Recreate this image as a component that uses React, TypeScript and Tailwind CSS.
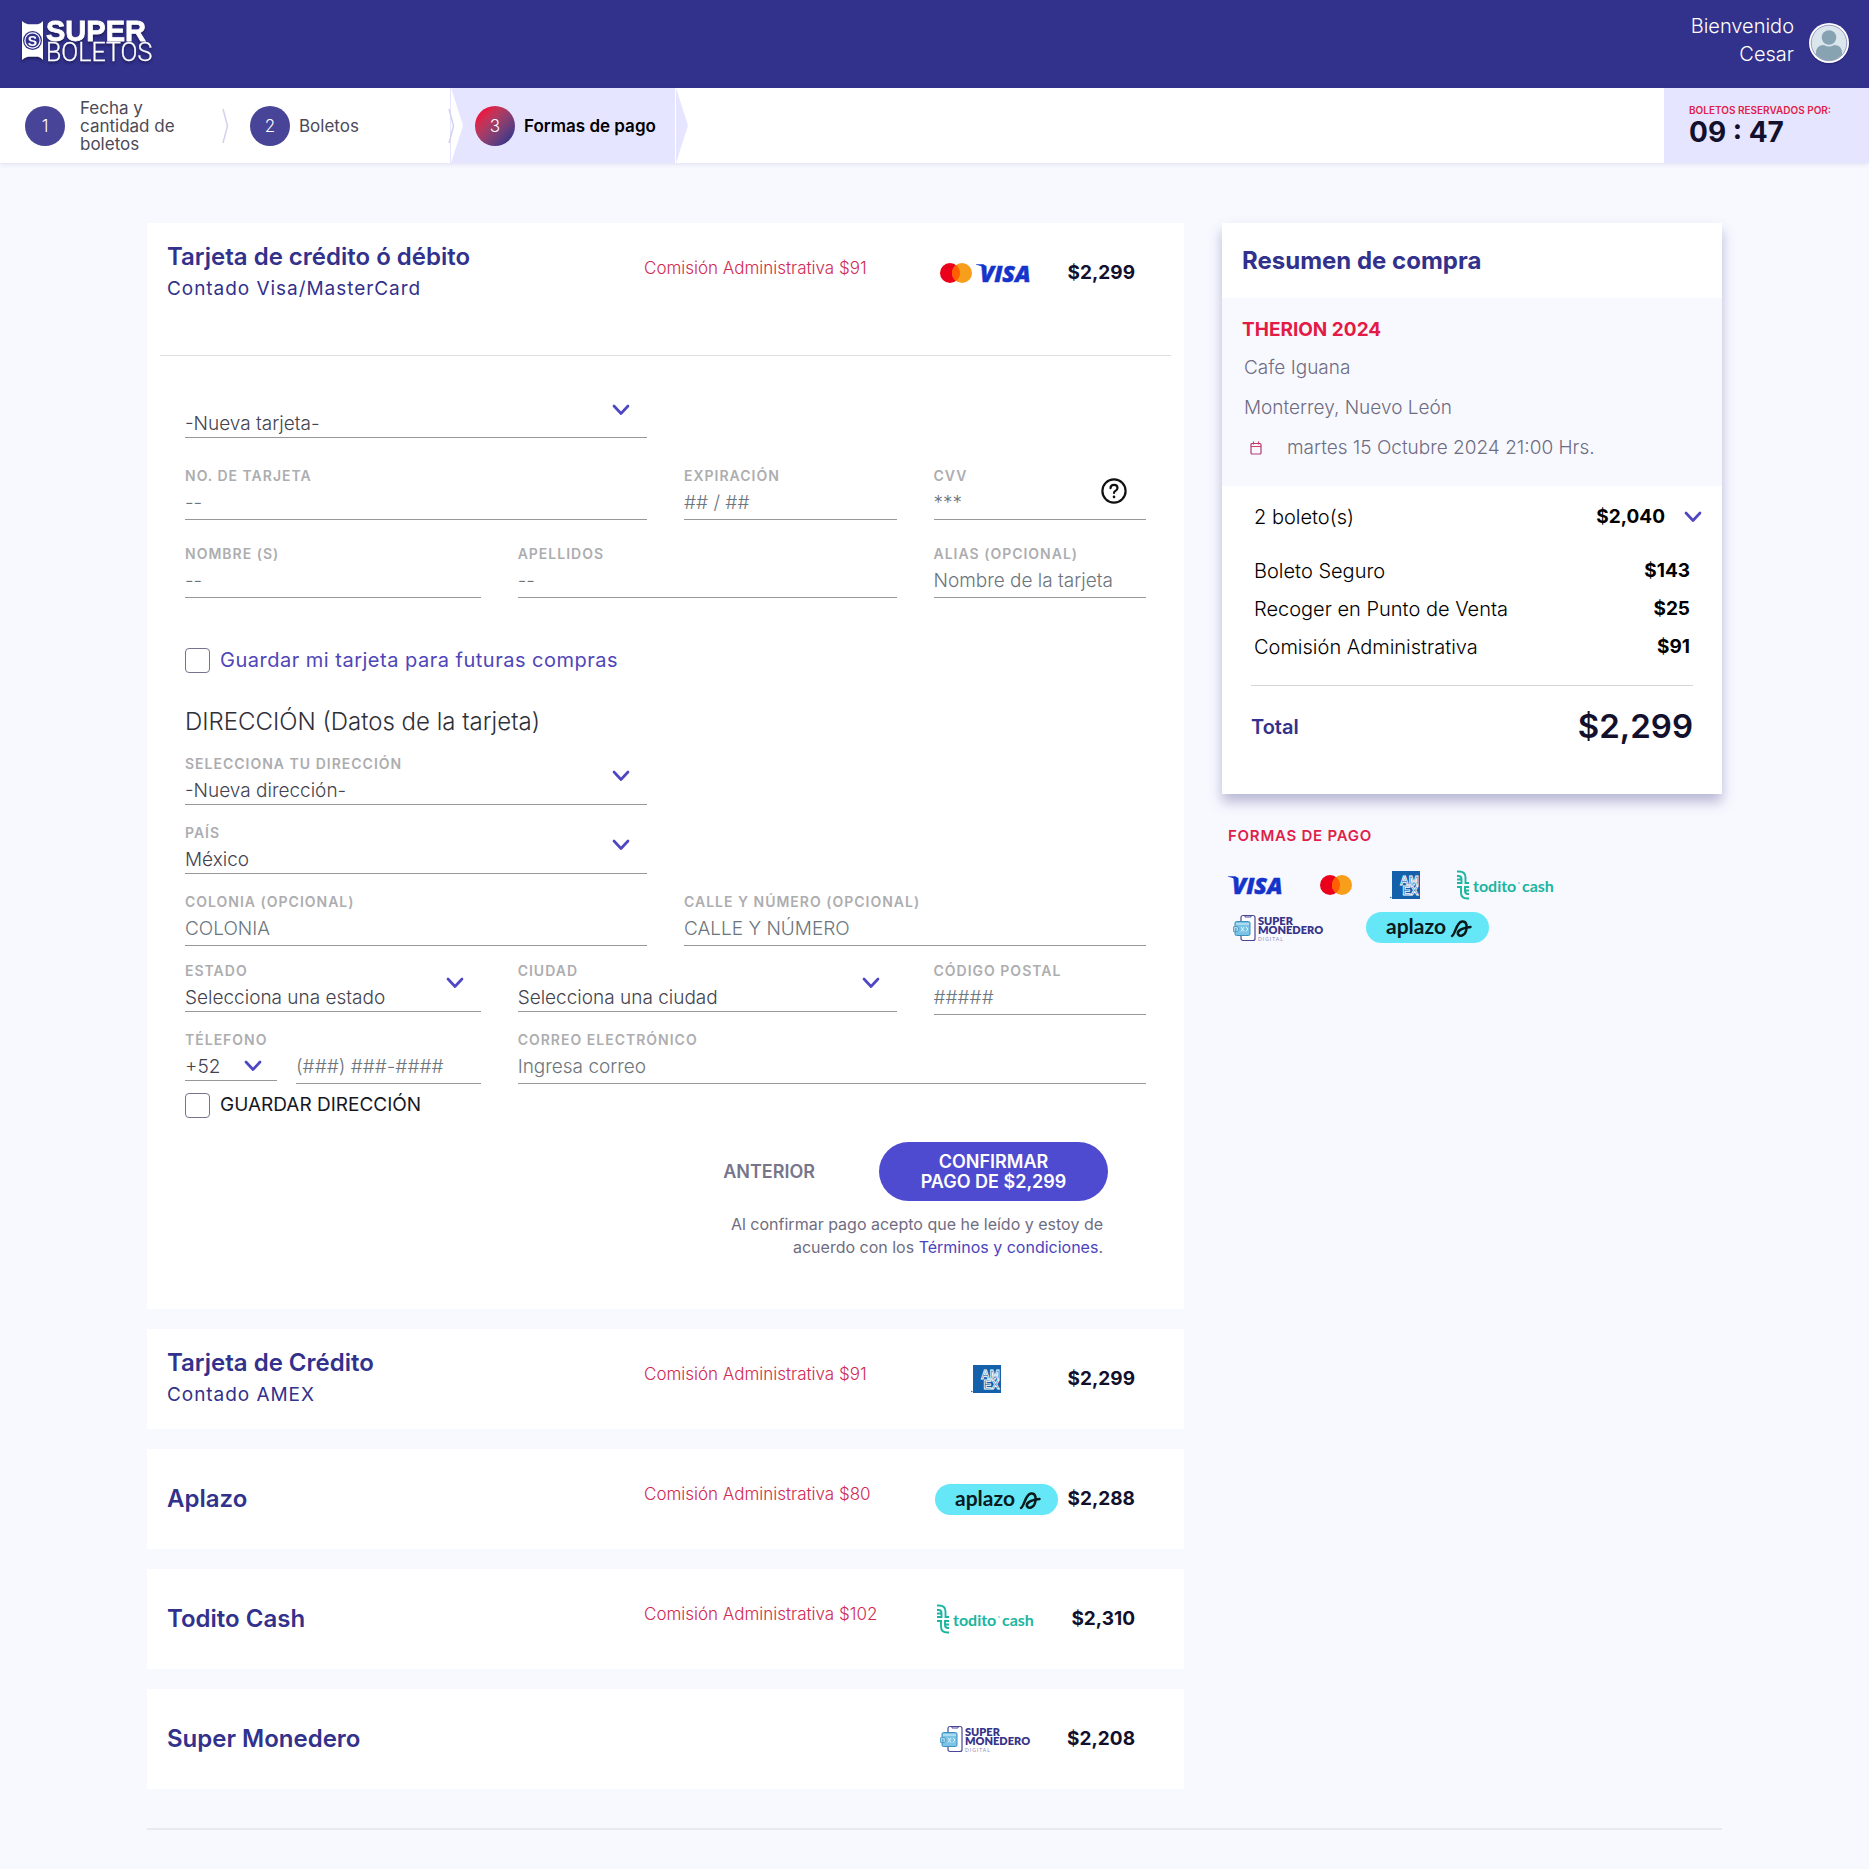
import React from "react";

function Chevron({ className = "" }: { className?: string }) {
  return (
    <svg viewBox="0 0 18 12" className={`h-3 w-[18px] ${className}`} fill="none" aria-hidden="true">
      <path d="M2 2l7 7.500L16 2" stroke="#4f46c4" strokeWidth="2.700" strokeLinecap="round" strokeLinejoin="round" />
    </svg>
  );
}

function SuperBoletosLogo() {
  return (
    <svg viewBox="0 -8 140 60" className="h-[60px] w-[140px] drop-shadow-[0_2px_1px_rgba(10,10,50,0.5)]" role="img" aria-label="Superboletos">
      <path d="M2 1q2.500 2.500 6 3.200h10q3-.7 5-3.200V40q-2-2.500-5-3.200H8q-3.500.7-6 3.200z" fill="#fff" />
      <circle cx="12.500" cy="20.500" r="9.500" fill="#32318b" />
      <circle cx="12.500" cy="20.500" r="8.200" fill="#fff" />
      <circle cx="12.500" cy="20.500" r="7" fill="#32318b" />
      <text x="12.500" y="25.500" textAnchor="middle" fill="#fff" fontSize="14" fontWeight="700" fontFamily="Liberation Sans, sans-serif">S</text>
      <text x="26" y="20.500" fill="#fff" stroke="#fff" strokeWidth=".8" fontSize="29" fontWeight="700" fontFamily="Liberation Sans, sans-serif">SUPER</text>
      <text x="26" y="40.500" fill="#fff" stroke="#fff" strokeWidth=".3" fontSize="25" fontWeight="300" fontFamily="Roboto, sans-serif">BOLETOS</text>
    </svg>
  );
}

function Mastercard() {
  return (
    <svg viewBox="0 0 32 20" className="h-5 w-8 shrink-0" role="img" aria-label="Mastercard">
      <circle cx="10" cy="10" r="10" fill="#eb001b" />
      <circle cx="22" cy="10" r="10" fill="#f79e1b" />
      <path d="M16 2a10 10 0 0 1 0 16a10 10 0 0 1 0-16z" fill="#ff5f00" />
    </svg>
  );
}

function Visa() {
  return (
    <svg viewBox="0 0 56 20" className="h-5 w-14 shrink-0 overflow-visible" role="img" aria-label="Visa">
      <path d="M0 1.200h7.500l2 1.600 1 4Q6.500 3 0 1.800z" fill="#1434cb" />
      <text x="4" y="18.500" fill="#1434cb" stroke="#1434cb" strokeWidth=".5" fontSize="23" fontStyle="italic" fontWeight="800" fontFamily="Open Sans, sans-serif">VISA</text>
    </svg>
  );
}

function Amex() {
  return (
    <svg viewBox="0 0 30 28" className="h-7 w-[30px] shrink-0" role="img" aria-label="American Express">
      <path d="M2 0h28v28H2z" fill="#1560ab" />
      <circle cx=".8" cy="26.500" r=".7" fill="#1560ab" />
      <g fill="#1560ab" stroke="#fff" strokeWidth=".8" fontSize="12" fontWeight="700" fontFamily="Liberation Sans, sans-serif">
        <text x="10" y="13.500">AM</text>
        <text x="12.500" y="24">EX</text>
      </g>
    </svg>
  );
}

function Todito() {
  return (
    <svg viewBox="0 0 100 30" className="h-[30px] w-[100px] shrink-0" role="img" aria-label="todito cash">
      <g fill="none" stroke="#1bb5a0" strokeWidth="1.900">
        <path d="M1 1.500h2q6.500 0 6.500 6V13h3.500M1 6h1.500Q5.500 6 5.500 9v4H1M1 9.500h4.500" />
        <path d="M13 28.500h-1.500q-6.500 0-6.500-6V17H1M13 24h-1q-3 0-3-3v-4h4M9 20.500h4" />
      </g>
      <text x="17" y="22" fill="#1bb5a0" fontSize="16" fontWeight="700" fontFamily="Lato, sans-serif">todito</text>
      <circle cx="63" cy="13" r=".7" fill="#1bb5a0" />
      <text x="66" y="22" fill="#1bb5a0" fontSize="16" fontWeight="700" fontFamily="Lato, sans-serif">cash</text>
    </svg>
  );
}

function SuperMonedero() {
  return (
    <svg viewBox="0 0 92 28" className="h-7 w-[92px] shrink-0" role="img" aria-label="Super Monedero Digital">
      <rect x="8" y="1.500" width="14" height="25" rx="2" fill="#fff" stroke="#4a4796" strokeWidth="1.200" />
      <path d="M12 1.500v1.500h6V1.500" fill="none" stroke="#4a4796" />
      <rect x="2" y="7.500" width="15" height="14" rx="1.500" fill="#7cc4e6" stroke="#3b8fbe" />
      <path d="M3 10h13M1 13.500h4v4H1zM8 13l3 4.500m0-4.500l-3 4.500M13 13l2 2-2 2.500" fill="none" stroke="#e8f8ff" strokeWidth=".9" />
      <path d="M.6 12.800h4.200q2 2.500 0 4.800H.6z" fill="none" stroke="#3b8fbe" strokeWidth=".9" />
      <text x="25" y="10.500" fill="#373388" fontSize="11" fontWeight="800" fontFamily="Lato, sans-serif">SUPER</text>
      <text x="25" y="20" fill="#373388" fontSize="11" fontWeight="800" fontFamily="Lato, sans-serif">MONEDERO</text>
      <text x="25" y="27" fill="#8d8bb8" fontSize="5" letterSpacing="1" fontFamily="Lato, sans-serif">DIGITAL</text>
    </svg>
  );
}

function AplazoLogo() {
  return (
    <svg viewBox="0 0 123 31" className="h-[31px] w-[123px] shrink-0" role="img" aria-label="aplazo">
      <rect width="123" height="31" rx="15.500" fill="#66e7f7" />
      <text x="20" y="22" fill="#0b1a1c" fontSize="21" fontWeight="700" fontFamily="Lato, sans-serif">aplazo</text>
      <path d="M86 24c3.500-2 4-13.500 10-14.500 5.500-.5 5 6 4 9.500-1.500 5-6.500 6-8 3.200-1.200-2.800 3-6.200 12.500-7.200" fill="none" stroke="#0b1a1c" strokeWidth="2.500" strokeLinecap="round" />
    </svg>
  );
}

function Avatar() {
  return (
    <svg viewBox="0 0 44 44" className="-mt-0.5 size-11" role="img" aria-label="Perfil">
      <circle cx="22" cy="23" r="20.500" fill="#201f66" opacity=".5" />
      <circle cx="22" cy="22" r="20" fill="#fff" />
      <circle cx="22" cy="22" r="17.800" fill="#dbe6ec" stroke="#8583bb" strokeWidth=".8" />
      <clipPath id="avatar-clip"><circle cx="22" cy="22" r="17.500" /></clipPath>
      <g fill="#87a3b2" clipPath="url(#avatar-clip)">
        <circle cx="22" cy="16.500" r="7.300" />
        <path d="M9 44V32q0-8 8-8 5 3 10 0 8 0 8 8v12z" />
      </g>
    </svg>
  );
}

const labelClass = "block h-5 text-sm leading-5 font-semibold tracking-[1px] whitespace-nowrap text-[#adadb0]";
const inputClass =
  "block h-[34px] w-full rounded-none border-b border-[#98989c] bg-transparent text-[19px] font-light text-[#5b5b6c] outline-none placeholder:text-[#6c757d] placeholder:opacity-100";
const selectClass =
  "block h-[31px] w-full appearance-none rounded-none border-b border-[#98989c] bg-transparent pt-[3px] text-[19px] leading-6 font-light text-[#43434f] outline-none";

type FieldProps = { id: string; label: string; placeholder: string; className: string; children?: React.ReactNode };

function TextField({ id, label, placeholder, className, children }: FieldProps) {
  return (
    <div className={`relative ${className}`}>
      <label htmlFor={id} className={labelClass}>{label}</label>
      <input id={id} placeholder={placeholder} className={inputClass} />
      {children}
    </div>
  );
}

function SelectField({ id, label, option, className }: { id: string; label: string; option: string; className: string }) {
  return (
    <div className={`relative ${className}`}>
      <label htmlFor={id} className={labelClass}>{label}</label>
      <select id={id} className={selectClass}>
        <option>{option}</option>
      </select>
      <Chevron className="pointer-events-none absolute top-4 right-[17px]" />
    </div>
  );
}

function CheckField({ id, children, className }: { id: string; children: React.ReactNode; className: string }) {
  return (
    <div className="flex h-7 items-center gap-2.5">
      <input id={id} type="checkbox" className="size-[25px] shrink-0 appearance-none rounded border border-[#77738c] bg-white checked:bg-[#4f4bd0]" />
      <label htmlFor={id} className={className}>{children}</label>
    </div>
  );
}

function MethodHeader({ title, subtitle, fee, logo, price }: { title: string; subtitle?: string; fee?: string; logo: React.ReactNode; price: string }) {
  return (
    <div className="flex h-[100px] items-center pr-[49px] pl-5 whitespace-nowrap">
      <div className="flex-1">
        <h2 className="text-2xl leading-8 font-semibold text-[#32318b]">{title}</h2>
        {subtitle && <p className="text-[19px] leading-8 tracking-wider text-[#32318b]">{subtitle}</p>}
      </div>
      <p className="w-[289px] pb-2 text-[17px] font-light text-[#d02a52]">{fee}</p>
      <div className="flex w-[130px] items-center">{logo}</div>
      <p className="w-[72px] text-right text-[19px] font-bold text-[#12102c]">{price}</p>
    </div>
  );
}

function CardForm() {
  return (
    <form className="mx-[13px] border-t border-[#dfdfe2] px-[25px] pt-[51px]" onSubmit={(e) => e.preventDefault()}>
      <div className="grid grid-cols-12 gap-x-[37px]">
        <div className="relative col-span-6 h-[59px]">
          <select aria-label="Tarjeta" className={selectClass}>
            <option>-Nueva tarjeta-</option>
          </select>
          <Chevron className="pointer-events-none absolute -top-[3px] right-[17px]" />
        </div>
      </div>
      <div className="grid auto-rows-[78px] grid-cols-12 gap-x-[37px]">
        <TextField id="card-number" label="NO. DE TARJETA" placeholder="--" className="col-span-6" />
        <TextField id="card-exp" label="EXPIRACIÓN" placeholder="## / ##" className="col-span-3" />
        <TextField id="card-cvv" label="CVV" placeholder="***" className="col-span-3">
          <button type="button" aria-label="Ayuda CVV" className="absolute top-3 right-[19px]">
            <svg viewBox="0 0 26 26" className="size-[26px]" fill="none" stroke="#111" strokeWidth="2.200" strokeLinecap="round">
              <circle cx="13" cy="13" r="11.600" />
              <path d="M9.500 10.200q0-3.400 3.500-3.400t3.500 3.200q0 1.800-2 2.900-1.500.9-1.500 2.100" />
              <path d="M13 18.800v.1" strokeWidth="2.600" />
            </svg>
          </button>
        </TextField>
        <TextField id="first-name" label="NOMBRE (S)" placeholder="--" className="col-span-4" />
        <TextField id="last-name" label="APELLIDOS" placeholder="--" className="col-span-5" />
        <TextField id="alias" label="ALIAS (OPCIONAL)" placeholder="Nombre de la tarjeta" className="col-span-3" />
      </div>
      <div className="pt-6">
        <CheckField id="save-card" className="text-xl tracking-wide text-[#4f46b8]">Guardar mi tarjeta para futuras compras</CheckField>
      </div>
      <h3 className="pt-8 pb-4 text-2xl leading-8 font-light text-[#2f2f38]">DIRECCIÓN (Datos de la tarjeta)</h3>
      <div className="grid auto-rows-[69px] grid-cols-12 gap-x-[37px]">
        <SelectField id="address" label="SELECCIONA TU DIRECCIÓN" option="-Nueva dirección-" className="col-span-6" />
        <SelectField id="country" label="PAÍS" option="México" className="col-span-6 col-start-1" />
        <TextField id="colony" label="COLONIA (OPCIONAL)" placeholder="COLONIA" className="col-span-6 col-start-1" />
        <TextField id="street" label="CALLE Y NÚMERO (OPCIONAL)" placeholder="CALLE Y NÚMERO" className="col-span-6" />
        <SelectField id="state" label="ESTADO" option="Selecciona una estado" className="col-span-4" />
        <SelectField id="city" label="CIUDAD" option="Selecciona una ciudad" className="col-span-5" />
        <TextField id="zip" label="CÓDIGO POSTAL" placeholder="#####" className="col-span-3" />
        <div className="col-span-4">
          <label htmlFor="phone" className={labelClass}>TÉLEFONO</label>
          <div className="flex items-start gap-[19px]">
            <div className="relative w-[92px] shrink-0">
              <select aria-label="Lada" className={selectClass}>
                <option>+52</option>
              </select>
              <Chevron className="pointer-events-none absolute top-2.5 right-[15px]" />
            </div>
            <input id="phone" placeholder="(###) ###-####" className={inputClass} />
          </div>
        </div>
        <TextField id="email" label="CORREO ELECTRÓNICO" placeholder="Ingresa correo" className="col-span-8" />
      </div>
      <div className="-mt-2">
        <CheckField id="save-address" className="text-[19px] text-[#17171f]">GUARDAR DIRECCIÓN</CheckField>
      </div>
      <div className="mt-[23px] flex items-center justify-end gap-16 pr-[38px]">
        <button type="button" className="text-lg font-semibold text-[#77758b]">ANTERIOR</button>
        <button type="submit" className="h-[59px] w-[229px] rounded-full bg-[#4f4bd0] text-lg leading-5 font-semibold text-white">
          CONFIRMAR
          <br />
          PAGO DE $2,299
        </button>
      </div>
      <p className="mt-3 mb-[50px] pr-[43px] text-right text-base leading-[23px] text-[#6f6d82]">
        Al confirmar pago acepto que he leído y estoy de
        <br />
        acuerdo con los <a href="#terminos" className="text-[#4a44bd]">Términos y condiciones</a>.
      </p>
    </form>
  );
}

const methods = [
  { title: "Tarjeta de Crédito", subtitle: "Contado AMEX", fee: "Comisión Administrativa $91", logo: <div className="pl-[38px]"><Amex /></div>, price: "$2,299" },
  { title: "Aplazo", fee: "Comisión Administrativa $80", logo: <div className="pl-0.5"><AplazoLogo /></div>, price: "$2,288" },
  { title: "Todito Cash", fee: "Comisión Administrativa $102", logo: <div className="pl-[3px]"><Todito /></div>, price: "$2,310" },
  { title: "Super Monedero", logo: <div className="pl-[7px]"><SuperMonedero /></div>, price: "$2,208" },
];

const charges = [
  { name: "Boleto Seguro", amount: "$143" },
  { name: "Recoger en Punto de Venta", amount: "$25" },
  { name: "Comisión Administrativa", amount: "$91" },
];

function Summary() {
  return (
    <aside className="w-[500px] shrink-0">
      <section className="bg-white pb-[27px] shadow-[0_8px_12px_rgba(90,85,150,0.4)]">
        <h2 className="flex h-[75px] items-center px-5 text-2xl font-bold text-[#32318b]">Resumen de compra</h2>
        <div className="h-[188px] bg-[#f8f9ff] pt-3 pl-[22px] text-[19px] leading-10 font-light text-[#6f6d82]">
          <h3 className="-ml-0.5 text-[19px] leading-10 font-bold text-[#e31b45]">THERION 2024</h3>
          <p className="-mt-0.5">Cafe Iguana</p>
          <p>Monterrey, Nuevo León</p>
          <p className="flex items-center">
            <svg viewBox="0 0 12 14" className="mr-[25px] ml-1.5 h-3.5 w-3" fill="none" stroke="#b03a78" strokeWidth="1.200" aria-hidden="true">
              <rect x="1" y="2.500" width="10" height="10.500" rx="1" />
              <path d="M1 5.500h10M3.500.5v3M8.500.5v3" stroke="#dc3a60" />
            </svg>
            martes 15 Octubre 2024 21:00 Hrs.
          </p>
        </div>
        <div className="flex h-[62px] items-center pr-5 pl-8">
          <span className="flex-1 text-xl font-light text-black">2 boleto(s)</span>
          <span className="text-[19px] font-bold text-black">$2,040</span>
          <button type="button" aria-label="Ver detalle" className="ml-[19px]"><Chevron /></button>
        </div>
        <dl className="px-8 pt-1 leading-[38px]">
          {charges.map((c) => (
            <div key={c.name} className="flex justify-between">
              <dt className="text-xl leading-[38px] font-light text-black">{c.name}</dt>
              <dd className="text-[19px] leading-[38px] font-bold text-black">{c.amount}</dd>
            </div>
          ))}
        </dl>
        <div className="mx-[29px] mt-[19px] flex h-[82px] items-center justify-between border-t border-[#d5d5d9]">
          <span className="text-xl font-semibold text-[#32318b]">Total</span>
          <span className="text-[33px] font-semibold text-[#12102c]">$2,299</span>
        </div>
      </section>
      <section className="pt-8 pl-1.5">
        <h3 className="text-[15px] leading-5 font-semibold tracking-wider text-[#de1f4a]">FORMAS DE PAGO</h3>
        <div className="mt-[23px] flex h-8 items-center">
          <Visa />
          <div className="ml-9"><Mastercard /></div>
          <div className="ml-[38px]"><Amex /></div>
          <div className="ml-9"><Todito /></div>
        </div>
        <div className="mt-[11px] flex items-center pl-[5px]">
          <SuperMonedero />
          <div className="ml-[41px]"><AplazoLogo /></div>
        </div>
      </section>
    </aside>
  );
}

function StepArrow() {
  return (
    <svg viewBox="0 0 8 36" className="h-9 w-2" fill="none" stroke="#d3d1ee" strokeWidth="1.500" aria-hidden="true">
      <path d="M1 1l4.500 17L1 35" />
    </svg>
  );
}

function Steps() {
  return (
    <nav aria-label="Progreso" className="flex h-[75px] bg-white text-[17px] leading-[18px] text-[#4b4a58] shadow-[0_1px_5px_rgba(60,60,140,0.15)]">
      <ol className="flex flex-1">
        <li className="flex w-[230px] items-center pl-[25px]">
          <span className="flex size-10 shrink-0 items-center justify-center rounded-full bg-[#484497] font-light text-white">1</span>
          <span className="ml-[15px] w-[115px]">Fecha y cantidad de boletos</span>
          <span className="ml-auto"><StepArrow /></span>
        </li>
        <li className="flex w-[220px] items-center pl-5">
          <span className="flex size-10 items-center justify-center rounded-full bg-[#484497] font-light text-white">2</span>
          <span className="ml-[9px]">Boletos</span>
          <span className="relative z-10 -mr-1.5 ml-auto"><StepArrow /></span>
        </li>
        <li className="flex w-[239px] items-center" aria-current="step">
          <div className="flex h-full w-[225px] items-center bg-[#e6e5ff]">
            <svg viewBox="0 0 13 75" className="h-full w-[13px]" aria-hidden="true"><path d="M1 0l12 37.500L1 75z" fill="#fff" /></svg>
            <span className="ml-3 flex size-10 items-center justify-center rounded-full bg-linear-to-br from-[#e31b45] from-20% to-[#32318b] to-90% font-light text-white">3</span>
            <span className="ml-[9px] font-semibold whitespace-nowrap text-black">Formas de pago</span>
          </div>
          <svg viewBox="0 0 13 75" className="ml-px h-full w-[13px]" aria-hidden="true"><path d="M0 0l12 37.500L0 75z" fill="#e6e5ff" /></svg>
        </li>
      </ol>
      <div className="w-[205px] bg-[#e6e5ff] pt-4 pl-[25px]">
        <p className="text-[10px] leading-3 font-semibold whitespace-nowrap text-[#de1f4a]">BOLETOS RESERVADOS POR:</p>
        <p className="text-[28px] leading-8 font-bold whitespace-nowrap text-[#12102c]">09 : 47</p>
      </div>
    </nav>
  );
}

export default function App() {
  return (
    <div className="min-h-screen bg-[#f8f9ff] font-['Inter',sans-serif]">
      <header className="flex h-[88px] items-center justify-between bg-[#32318b] pr-[18px] pl-5">
        <a href="#inicio" className="-mt-1"><SuperBoletosLogo /></a>
        <div className="flex items-center gap-[13px]">
          <p className="pb-2 text-right text-xl leading-7 font-light text-white">
            Bienvenido
            <br />
            Cesar
          </p>
          <Avatar />
        </div>
      </header>
      <Steps />
      <main className="px-[147px] pt-[60px] pb-[38px]">
        <div className="flex gap-[38px] border-b-2 border-[#e9e9ef] pb-[39px]">
          <div className="flex min-w-0 flex-1 flex-col gap-5">
            <section className="bg-white">
              <div className="mb-8">
                <MethodHeader
                  title="Tarjeta de crédito ó débito"
                  subtitle="Contado Visa/MasterCard"
                  fee="Comisión Administrativa $91"
                  price="$2,299"
                  logo={<div className="flex items-center gap-1 pl-[7px]"><Mastercard /><Visa /></div>}
                />
              </div>
              <CardForm />
            </section>
            {methods.map((m) => (
              <section key={m.title} className="bg-white">
                <MethodHeader {...m} />
              </section>
            ))}
          </div>
          <Summary />
        </div>
      </main>
    </div>
  );
}
